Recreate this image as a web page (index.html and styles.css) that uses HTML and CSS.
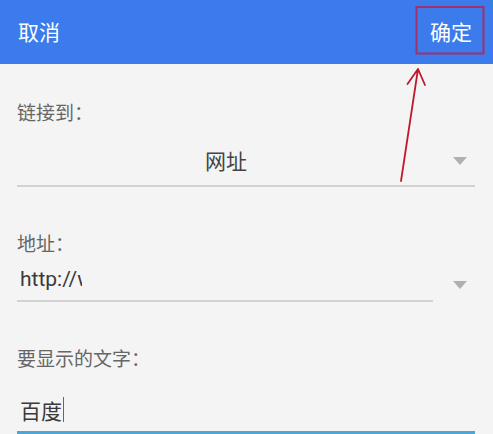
FILE: index.html
```html
<!DOCTYPE html>
<html lang="zh">
<head>
<meta charset="utf-8">
<link rel="stylesheet" href="styles.css">
</head>
<body>
<div class="app">
  <header class="topbar">
    <span class="btn">取消</span>
    <span class="btn">确定</span>
  </header>
  <main class="form">
    <div class="field first">
      <div class="label">链接到：</div>
      <div class="select">
        <span class="select-value">网址</span>
        <span class="tri"></span>
      </div>
    </div>
    <div class="field">
      <div class="label">地址：</div>
      <div class="combo">
        <div class="combo-input"><span class="clip">http://www.baidu.com</span></div>
        <span class="tri"></span>
      </div>
    </div>
    <div class="field">
      <div class="label">要显示的文字：</div>
      <div class="text-input"><span class="val">百度</span><span class="caret"></span></div>
    </div>
  </main>
  <svg class="annot" width="493" height="434" viewBox="0 0 493 434">
    <rect x="416.5" y="7" width="67" height="46.5" fill="none" stroke="#a2306a" stroke-width="2"/>
    <path d="M401 181 L418 69 M407.5 84 L418 69 L425 85" fill="none" stroke="#c0182c" stroke-width="1.8" stroke-linecap="round" stroke-linejoin="round"/>
  </svg>
</div>
</body>
</html>
```
FILE: styles.css
```css
html, body {
  margin: 0;
  padding: 0;
}
body {
  background: #f4f4f4;
  font-family: "Noto Sans CJK SC", "Noto Sans", sans-serif;
}
.app {
  position: relative;
  width: 493px;
  height: 434px;
  overflow: hidden;
  background: #f4f4f4;
}
.topbar {
  height: 64px;
  background: #3b7bec;
  display: flex;
  align-items: center;
  justify-content: space-between;
  padding: 0 21px 0 18px;
  box-sizing: border-box;
}
.btn {
  color: #ffffff;
  font-size: 21px;
  line-height: 28px;
  margin-top: -2px;
}
.form {
  padding: 0 18px 0 17px;
}
.field {
  margin-top: 44px;
}
.field.first {
  margin-top: 36px;
}
.label {
  font-size: 19px;
  line-height: 24px;
  color: #666666;
}
.select {
  border-bottom: 2px solid #d2d2d2;
  box-sizing: border-box;
  height: 63px;
  display: flex;
  align-items: flex-end;
  justify-content: center;
  position: relative;
  padding-bottom: 11px;
}
.select-value {
  font-size: 21px;
  line-height: 28px;
  color: #444444;
  margin-left: -40px;
}
.tri {
  width: 0;
  height: 0;
  border-left: 7px solid transparent;
  border-right: 7px solid transparent;
  border-top: 8px solid #b0b0b0;
}
.select .tri {
  position: absolute;
  right: 8px;
  top: 33px;
}
.combo {
  display: flex;
  align-items: flex-end;
}
.combo-input {
  width: 416px;
  height: 47px;
  box-sizing: border-box;
  border-bottom: 2px solid #d2d2d2;
  display: flex;
  align-items: flex-end;
  padding: 0 0 7px 3px;
}
.clip {
  display: block;
  width: 62px;
  overflow: hidden;
  white-space: nowrap;
  font-family: Roboto, "Noto Sans", sans-serif;
  font-size: 21px;
  line-height: 28px;
  color: #3a3a3a;
}
.combo .tri {
  margin: 0 0 13px 20px;
}
.text-input {
  height: 64px;
  box-sizing: border-box;
  border-bottom: 3px solid #4da6d6;
  display: flex;
  align-items: flex-end;
  padding: 0 0 7px 3px;
}
.val {
  font-size: 21px;
  line-height: 28px;
  color: #3a3a3a;
}
.caret {
  width: 1px;
  height: 25px;
  background: #666666;
  margin: 0 0 2px 1px;
}
.annot {
  position: absolute;
  left: 0;
  top: 0;
  pointer-events: none;
}
```
